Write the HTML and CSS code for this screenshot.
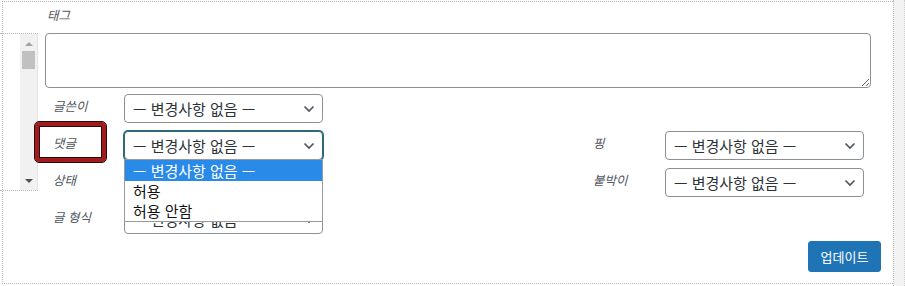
FILE: index.html
```html
<!DOCTYPE html>
<html lang="ko">
<head>
<meta charset="utf-8">
<title>일괄 편집</title>
<link rel="stylesheet" href="styles.css">
</head>
<body>
<div class="page">
  <div class="panel">
    <div class="side">
      <div class="listbox">
        <div class="list-blank"></div>
        <div class="vscroll">
          <span class="arrow-up"></span>
          <span class="thumb"></span>
          <span class="vscroll-fill"></span>
          <span class="arrow-down"></span>
        </div>
      </div>
    </div>
    <div class="main">
      <div class="tag-label">태그</div>
      <textarea class="tags"></textarea>
      <div class="fields">
        <div class="field l1">
          <span class="label">글쓴이</span>
          <div class="select"><span class="sel-text">— 변경사항 없음 —</span><svg class="chev" width="12" height="8" viewBox="0 0 12 8"><path d="M1.5 1.5 L6 6 L10.5 1.5" fill="none" stroke="#50575e" stroke-width="1.7"/></svg></div>
        </div>
        <div class="field l2">
          <span class="label">댓글</span>
          <div class="select focused"><span class="sel-text">— 변경사항 없음 —</span><svg class="chev" width="12" height="8" viewBox="0 0 12 8"><path d="M1.5 1.5 L6 6 L10.5 1.5" fill="none" stroke="#50575e" stroke-width="1.7"/></svg>
            <ul class="dropdown">
              <li class="opt selected">— 변경사항 없음 —</li>
              <li class="opt">허용</li>
              <li class="opt">허용 안함</li>
            </ul>
          </div>
        </div>
        <div class="field l3">
          <span class="label">상태</span>
          <div class="select"><span class="sel-text">— 변경사항 없음 —</span><svg class="chev" width="12" height="8" viewBox="0 0 12 8"><path d="M1.5 1.5 L6 6 L10.5 1.5" fill="none" stroke="#50575e" stroke-width="1.7"/></svg></div>
        </div>
        <div class="field l4">
          <span class="label">글 형식</span>
          <div class="select"><span class="sel-text">— 변경사항 없음 —</span><svg class="chev" width="12" height="8" viewBox="0 0 12 8"><path d="M1.5 1.5 L6 6 L10.5 1.5" fill="none" stroke="#50575e" stroke-width="1.7"/></svg></div>
        </div>
        <div class="field r2">
          <span class="label">핑</span>
          <div class="select"><span class="sel-text">— 변경사항 없음 —</span><svg class="chev" width="12" height="8" viewBox="0 0 12 8"><path d="M1.5 1.5 L6 6 L10.5 1.5" fill="none" stroke="#50575e" stroke-width="1.7"/></svg></div>
        </div>
        <div class="field r3">
          <span class="label">붙박이</span>
          <div class="select"><span class="sel-text">— 변경사항 없음 —</span><svg class="chev" width="12" height="8" viewBox="0 0 12 8"><path d="M1.5 1.5 L6 6 L10.5 1.5" fill="none" stroke="#50575e" stroke-width="1.7"/></svg></div>
        </div>
      </div>
      <div class="actions">
        <button class="btn-update" type="button">업데이트</button>
      </div>
    </div>
  </div>
  <div class="rscroll"></div>
  <div class="highlight-box"></div>
</div>
</body>
</html>
```
FILE: styles.css
```css
* { box-sizing: border-box; }
html, body { margin: 0; padding: 0; background: #fff; }
body {
  font-family: "Noto Sans CJK KR", "Noto Sans", sans-serif;
  color: #2c3338;
}
.page {
  position: relative;
  width: 905px;
  height: 286px;
  display: flex;
  background: #fff;
  overflow: hidden;
}
.panel {
  width: 891px;
  height: 283px;
  margin-top: 1px;
  margin-left: 2px;
  border-top: 1px dotted #b8b8b8;
  border-left: 1px dotted #b8b8b8;
  border-bottom: 1px dotted #b8b8b8;
  display: flex;
}
.side {
  width: 35px;
  flex: none;
}
.listbox {
  margin-top: 31px;
  margin-left: -3px;
  width: 38px;
  height: 158px;
  border-top: 1px dotted #b8b8b8;
  border-bottom: 1px dotted #b8b8b8;
  display: flex;
}
.list-blank { width: 20px; }
.vscroll {
  width: 18px;
  background: #f1f1f1;
  border-right: 1px solid #e4e4e4;
  display: flex;
  flex-direction: column;
  align-items: center;
}
.arrow-up {
  margin-top: 8px;
  width: 0; height: 0;
  border-left: 4px solid transparent;
  border-right: 4px solid transparent;
  border-bottom: 4px solid #a3a3a3;
}
.thumb {
  margin-top: 5px;
  width: 13px;
  height: 18px;
  background: #c1c1c1;
}
.vscroll-fill { flex: 1; }
.arrow-down {
  margin-bottom: 7px;
  width: 0; height: 0;
  border-left: 4px solid transparent;
  border-right: 4px solid transparent;
  border-top: 4px solid #505050;
}
.main {
  flex: 1;
  display: flex;
  flex-direction: column;
}
.tag-label, .label {
  font-size: 12.5px;
  font-style: italic;
  color: #50575e;
  line-height: 18px;
}
.tag-label {
  margin-top: 4px;
  margin-left: 9px;
}
.tags {
  display: block;
  margin: 9px 0 0 7px;
  width: 826px;
  height: 55px;
  border: 1px solid #8c8f94;
  border-radius: 4px;
  background: #fff;
  font-family: inherit;
}
.fields {
  margin-top: 6px;
  margin-left: 15px;
  display: grid;
  grid-template-columns: 270px 272px;
  grid-template-rows: repeat(4, 29px);
  column-gap: 270px;
  row-gap: 8px;
}
.field {
  display: grid;
  grid-template-columns: 71px 199px;
  align-items: start;
}
.r2, .r3 { grid-template-columns: 72px 199px; }
.l1 { grid-column: 1; grid-row: 1; }
.l2 { grid-column: 1; grid-row: 2; }
.l3 { grid-column: 1; grid-row: 3; }
.l4 { grid-column: 1; grid-row: 4; }
.r2 { grid-column: 2; grid-row: 2; }
.r3 { grid-column: 2; grid-row: 3; }
.label { padding-top: 3px; }
.select {
  position: relative;
  height: 29px;
  border: 1px solid #8c8f94;
  border-radius: 4px;
  background: #fff;
  display: flex;
  align-items: center;
  justify-content: space-between;
  padding: 0 7px 0 8px;
}
.select.focused {
  border-color: #2f6a7c;
  box-shadow: 0 0 0 1px #2f6a7c;
}
.sel-text {
  font-size: 15px;
  line-height: 18px;
  color: #2c3338;
  white-space: nowrap;
}
.chev { flex: none; }
.dropdown {
  position: absolute;
  z-index: 5;
  top: 100%;
  left: -1px;
  right: -1px;
  margin: 0;
  padding: 0;
  list-style: none;
  background: #fff;
  border: 1px solid #9a9a9a;
}
.opt {
  height: 20px;
  line-height: 20px;
  padding-left: 8px;
  font-size: 15px;
  color: #111;
  white-space: nowrap;
}
.opt.selected {
  height: 21px;
  line-height: 21px;
  background: #2a8ae8;
  color: #fff;
}
.actions {
  display: flex;
  justify-content: flex-end;
  margin-top: 7px;
  margin-right: 12px;
}
.btn-update {
  width: 73px;
  height: 31px;
  border: 1px solid #1f74b6;
  border-radius: 3px;
  background: #1f74b6;
  color: #fff;
  font-family: inherit;
  font-size: 13px;
  line-height: 1;
  padding: 0;
}
.rscroll {
  width: 12px;
  height: 286px;
  background: #f3f3f3;
  border-left: 1px dotted #b8b8b8;
  border-right: 1px dotted #cfcfcf;
}
.highlight-box {
  position: absolute;
  left: 35px;
  top: 122px;
  width: 71px;
  height: 40px;
  border: 4px solid #a11d1d;
  border-radius: 4px;
  outline: 1px solid #2a0b0b;
  box-shadow: inset 0 0 0 1px #2a0b0b;
  z-index: 6;
}
```
